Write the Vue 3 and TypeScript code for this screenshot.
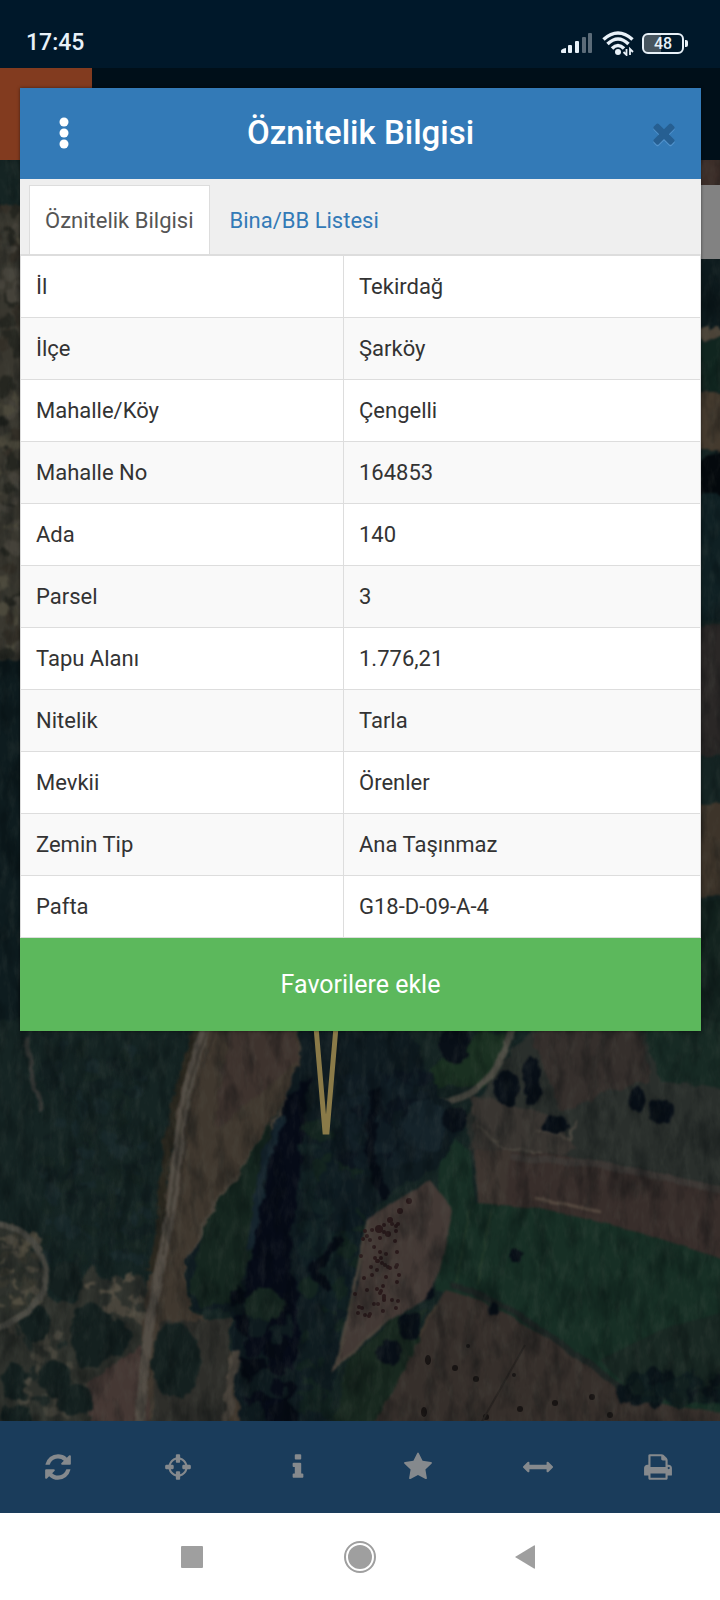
<script setup lang="ts">
import { ref } from 'vue'

interface Attribute {
  label: string
  value: string
}

interface Tool {
  name: string
  width: number
  path: string
}

interface Blob {
  x: number
  y: number
  rx: number
  ry: number
  fill: string
}

const tabs = ['Öznitelik Bilgisi', 'Bina/BB Listesi']
const activeTab = ref(0)

const attributes: Attribute[] = [
  { label: 'İl', value: 'Tekirdağ' },
  { label: 'İlçe', value: 'Şarköy' },
  { label: 'Mahalle/Köy', value: 'Çengelli' },
  { label: 'Mahalle No', value: '164853' },
  { label: 'Ada', value: '140' },
  { label: 'Parsel', value: '3' },
  { label: 'Tapu Alanı', value: '1.776,21' },
  { label: 'Nitelik', value: 'Tarla' },
  { label: 'Mevkii', value: 'Örenler' },
  { label: 'Zemin Tip', value: 'Ana Taşınmaz' },
  { label: 'Pafta', value: 'G18-D-09-A-4' },
]

const closePath =
  'M1298 1322q0 40-28 68l-136 136q-28 28-68 28t-68-28l-294-294-294 294q-28 28-68 28t-68-28l-136-136q-28-28-28-68t28-68l294-294-294-294q-28-28-28-68t28-68l136-136q28-28 68-28t68 28l294 294 294-294q28-28 68-28t68 28l136 136q28 28 28 68t-28 68l-294 294 294 294q28 28 28 68z'

const tools: Tool[] = [
  {
    name: 'Yenile',
    width: 1536,
    path: 'M1511 1056q0 5-1 7-64 268-268 434.5t-478 166.5q-146 0-282.5-55t-243.5-157l-129 129q-19 19-45 19t-45-19-19-45v-448q0-26 19-45t45-19h448q26 0 45 19t19 45-19 45l-137 137q71 66 161 102t187 36q134 0 250-65t186-179q11-17 53-117 8-23 30-23h192q13 0 22.5 9.5t9.5 22.5zm25-800v448q0 26-19 45t-45 19h-448q-26 0-45-19t-19-45 19-45l138-138q-148-137-349-137-134 0-250 65t-186 179q-11 17-53 117-8 23-30 23h-199q-13 0-22.5-9.5t-9.5-22.5v-7q65-268 270-434.5t480-166.5q146 0 284 55.5t245 156.5l130-129q19-19 45-19t45 19 19 45z',
  },
  {
    name: 'Konumum',
    width: 1536,
    path: 'M1197 1024h-109q-26 0-45-19t-19-45v-128q0-26 19-45t45-19h109q-32-108-112.5-188.5t-188.5-112.5v109q0 26-19 45t-45 19h-128q-26 0-45-19t-19-45v-109q-108 32-188.5 112.5t-112.5 188.5h109q26 0 45 19t19 45v128q0 26-19 45t-45 19h-109q32 108 112.5 188.5t188.5 112.5v-109q0-26 19-45t45-19h128q26 0 45 19t19 45v109q108-32 188.5-112.5t112.5-188.5zm339-192v128q0 26-19 45t-45 19h-143q-37 161-154.5 278.5t-278.5 154.5v143q0 26-19 45t-45 19h-128q-26 0-45-19t-19-45v-143q-161-37-278.5-154.5t-154.5-278.5h-143q-26 0-45-19t-19-45v-128q0-26 19-45t45-19h143q37-161 154.5-278.5t278.5-154.5v-143q0-26 19-45t45-19h128q26 0 45 19t19 45v143q161 37 278.5 154.5t154.5 278.5h143q26 0 45 19t19 45z',
  },
  {
    name: 'Bilgi',
    width: 640,
    path: 'M640 1344v128q0 26-19 45t-45 19h-512q-26 0-45-19t-19-45v-128q0-26 19-45t45-19h64v-384h-64q-26 0-45-19t-19-45v-128q0-26 19-45t45-19h384q26 0 45 19t19 45v576h64q26 0 45 19t19 45zm-128-1152v192q0 26-19 45t-45 19h-256q-26 0-45-19t-19-45v-192q0-26 19-45t45-19h256q26 0 45 19t19 45z',
  },
  {
    name: 'Favoriler',
    width: 1664,
    path: 'M1664 647q0 22-26 48l-363 354 86 500q1 7 1 20 0 21-10.5 35.5t-30.5 14.5q-19 0-40-12l-449-236-449 236q-22 12-40 12-21 0-31.5-14.5t-10.5-35.5q0-6 2-20l86-500-364-354q-25-27-25-48 0-37 56-46l502-73 225-455q19-41 49-41t49 41l225 455 502 73q56 9 56 46z',
  },
  {
    name: 'Ölçüm',
    width: 1792,
    path: 'M1792 896q0 26-19 45l-256 256q-19 19-45 19t-45-19-19-45v-128h-1024v128q0 26-19 45t-45 19-45-19l-256-256q-19-19-19-45t19-45l256-256q19-19 45-19t45 19 19 45v128h1024v-128q0-26 19-45t45-19 45 19l256 256q19 19 19 45z',
  },
  {
    name: 'Yazdır',
    width: 1664,
    path: 'M384 1536h896v-256h-896v256zm0-640h896v-384h-160q-40 0-68-28t-28-68v-160h-640v640zm1152 64q0-26-19-45t-45-19-45 19-19 45 19 45 45 19 45-19 19-45zm128 0v416q0 13-9.5 22.5t-22.5 9.5h-224v160q0 40-28 68t-68 28h-960q-40 0-68-28t-28-68v-160h-224q-13 0-22.5-9.5t-9.5-22.5v-416q0-79 56.5-135.5t135.5-56.5h64v-544q0-40 28-68t68-28h672q40 0 88 20t76 48l152 152q28 28 48 76t20 88v256h64q79 0 135.5 56.5t56.5 135.5z',
  },
]

// Small seeded generator, so that the vegetation is the same on every load.
let seed = 7
function random(): number {
  seed = (seed * 16807) % 2147483647
  return seed / 2147483647
}

function scatter(
  count: number,
  x: number,
  y: number,
  w: number,
  h: number,
  size: number,
  fills: string[],
): Blob[] {
  return Array.from({ length: count }, () => ({
    x: Math.round(x + random() * w),
    y: Math.round(y + random() * h),
    rx: Math.round(size * (0.5 + random())),
    ry: Math.round(size * (0.5 + random())),
    fill: fills[Math.floor(random() * fills.length)],
  }))
}

const forest = scatter(130, 45, 1030, 105, 230, 6, ['#121f20', '#18282a', '#162522'])
const rocks = [
  ...scatter(80, 0, 1235, 40, 90, 4, ['#504c3f', '#48453c', '#2c302a', '#35352d']),
  ...scatter(80, 10, 1320, 90, 100, 4, ['#4a483f', '#414038', '#1c2624', '#2a2d28']),
  ...scatter(40, 85, 1275, 60, 50, 5, ['#514c41', '#48443b', '#2a2e2a']),
  ...scatter(90, 0, 200, 20, 460, 6, ['#45423a', '#332f27', '#38372f', '#4b483b', '#252620']),
]
const grove = [
  ...scatter(90, 305, 1120, 55, 220, 9, ['#0d1a20', '#122224', '#13241f', '#0f1d22']),
  ...scatter(40, 305, 1320, 25, 100, 8, ['#12221f', '#0f1c20']),
  ...scatter(60, 240, 1290, 50, 130, 9, ['#070c17', '#0e1a1e', '#060b14']),
  ...scatter(80, 345, 1075, 80, 90, 9, ['#0c151e', '#121f26', '#0f1b22']),
]
const orchard = scatter(60, 352, 1222, 48, 95, 2, ['#2a1a1b']).filter(
  (b) => b.x > 352 + (1310 - b.y) * 0.12,
)
const shrubs = scatter(50, 625, 1375, 100, 26, 7, ['#0a1419', '#0e1c1e', '#12201f'])
</script>

<template>
  <div class="screen">
    <header class="status-bar">
      <time class="clock">17:45</time>
      <div class="indicators">
        <svg class="signal" viewBox="0 0 34 24" aria-hidden="true">
          <path d="M1 20Q1 18 6 17V22H2Q1 22 1 21Z" fill="#e8f1f8" />
          <rect x="8" y="14" width="4" height="8" rx="1" fill="#e8f1f8" />
          <rect x="15" y="10" width="4" height="12" rx="1" fill="#e8f1f8" />
          <rect x="22" y="6" width="4" height="16" rx="1" fill="#5b6b78" />
          <rect x="28" y="2" width="4" height="20" rx="1" fill="#5b6b78" />
        </svg>
        <svg class="wifi" viewBox="0 0 32 26" aria-hidden="true">
          <g fill="none" stroke="#e8f1f8" stroke-width="3.500">
            <path d="M1.500 9.500Q16-3.500 30.500 9.500" />
            <path d="M5.500 14Q16 4 26.500 14" />
            <path d="M10 18.500Q16 12.500 22 18.500" />
          </g>
          <circle cx="16" cy="22" r="3" fill="#e8f1f8" />
          <path d="M24.500 19v6l-3-3M28 25v-6l3 3" fill="none" stroke="#e8f1f8" stroke-width="1.800" />
        </svg>
        <div class="battery"><span class="battery-level">48</span></div>
      </div>
    </header>

    <div class="app-bar"><div class="app-tile"></div></div>

    <main class="map">
      <svg class="imagery" viewBox="0 160 720 1261" preserveAspectRatio="xMidYMid slice" aria-hidden="true">
        <defs>
          <filter id="rough" x="-5%" y="-5%" width="110%" height="110%" color-interpolation-filters="sRGB">
            <feTurbulence type="fractalNoise" baseFrequency="0.07" numOctaves="3" seed="4" />
            <feDisplacementMap in="SourceGraphic" scale="12" xChannelSelector="R" yChannelSelector="G" />
            <feGaussianBlur stdDeviation="1" />
          </filter>
          <filter id="smooth" x="-5%" y="-5%" width="110%" height="110%" color-interpolation-filters="sRGB">
            <feTurbulence type="fractalNoise" baseFrequency="0.05" numOctaves="2" seed="4" />
            <feDisplacementMap in="SourceGraphic" scale="4" xChannelSelector="R" yChannelSelector="G" />
            <feGaussianBlur stdDeviation="1" />
          </filter>
          <filter id="light" x="0" y="0" width="100%" height="100%" color-interpolation-filters="sRGB">
            <feTurbulence type="fractalNoise" baseFrequency="0.12 0.05" numOctaves="4" seed="9" />
            <feColorMatrix values="0 0 0 0 0.400  0 0 0 0 0.420  0 0 0 0 0.380  1.800 0 0 0 -0.800" />
          </filter>
          <filter id="shade" x="0" y="0" width="100%" height="100%" color-interpolation-filters="sRGB">
            <feTurbulence type="fractalNoise" baseFrequency="0.06 0.025" numOctaves="4" seed="2" />
            <feColorMatrix values="0 0 0 0 0  0 0 0 0 0.020  0 0 0 0 0.030  0 2.400 0 0 -1.050" />
          </filter>
        </defs>

        <rect y="160" width="720" height="1261" fill="#152423" />

        <g filter="url(#rough)">
          <!-- Western edge -->
          <rect x="-10" y="205" width="50" height="455" fill="#39372f" />
          <rect x="-10" y="660" width="50" height="360" fill="#0e1c1f" />

          <!-- Eastern edge -->
          <rect x="690" y="150" width="40" height="40" fill="#3b2d28" />
          <rect x="690" y="255" width="40" height="75" fill="#0d1a1d" />
          <rect x="690" y="328" width="40" height="10" fill="#4b4338" />
          <rect x="690" y="340" width="40" height="50" fill="#10251f" />
          <rect x="690" y="392" width="40" height="58" fill="#443a2e" />
          <path d="M730 440L700 465v30h30z" fill="#04090d" />
          <rect x="690" y="495" width="40" height="125" fill="#0f2023" />
          <rect x="690" y="625" width="40" height="130" fill="#2a2726" />
          <rect x="690" y="805" width="40" height="90" fill="#3d342a" />
          <rect x="690" y="900" width="40" height="130" fill="#13231f" />

          <!-- Forest canopy -->
          <g>
            <ellipse v-for="(b, i) in forest" :key="i" :cx="b.x" :cy="b.y" :rx="b.rx" :ry="b.ry" :fill="b.fill" />
          </g>
          <path d="M26 1035L30 1060 38 1090 40 1110" fill="none" stroke="#343735" stroke-width="6" />

          <!-- Rocky clearing -->
          <path d="M-10 1225L20 1228 45 1270 50 1300 75 1303 90 1265 105 1280 145 1275 150 1330 95 1430H-10z" fill="#2e312c" />
          <g>
            <ellipse v-for="(b, i) in rocks" :key="i" :cx="b.x" :cy="b.y" :rx="b.rx" :ry="b.ry" :fill="b.fill" />
          </g>

          <!-- Western field -->
          <path d="M205 1020L182 1085 168 1180 160 1240 148 1280 142 1330 145 1430H245L228 1330 190 1310 186 1265 215 1215 255 1150 290 1090 310 1065 295 1020z" fill="#40382f" />
          <path d="M230 1020H290L300 1060 250 1100 215 1130z" fill="#3e332e" />
          <path d="M305 1068L278 1120 215 1208 190 1260" fill="none" stroke="#4d463d" stroke-width="7" />
          <path d="M200 1025L178 1085 163 1180 160 1230 148 1270" fill="none" stroke="#2b281f" stroke-width="8" />
          <path d="M140 1345L88 1385V1430H150z" fill="#453834" />
          <path d="M160 1320H230V1430H150z" fill="#2e2e2a" />

          <g fill="#14201f">
            <ellipse cx="92" cy="1335" rx="22" ry="33" />
            <ellipse cx="115" cy="1338" rx="14" ry="18" />
            <ellipse cx="35" cy="1322" rx="14" ry="20" />
            <ellipse cx="55" cy="1378" rx="16" ry="18" />
            <ellipse cx="76" cy="1400" rx="18" ry="16" />
            <ellipse cx="15" cy="1380" rx="12" ry="20" />
            <ellipse cx="176" cy="1360" rx="24" ry="38" />
            <ellipse cx="66" cy="1282" rx="17" ry="18" />
            <ellipse cx="16" cy="1416" rx="15" ry="10" />
          </g>

          <!-- Eastern ground -->
          <path d="M340 1025H395L385 1060 350 1085z" fill="#2f2d2c" />
          <path d="M530 1025H640L730 1090V1220L480 1200 465 1120z" fill="#2a2f2c" />
          <path d="M530 1030L640 1030 650 1080 560 1110z" fill="#352f2c" />
          <path d="M640 1020H730V1090L660 1080z" fill="#172a24" />
          <path d="M470 1095L540 1110 580 1150 475 1170z" fill="#393531" />
          <path d="M410 1090L440 1060 485 1030 510 1035 490 1085z" fill="#1a3021" />
          <path d="M475 1125L505 1150 545 1152M535 1130L570 1140 576 1120" fill="none" stroke="#4b463f" stroke-width="3" />
        </g>

        <g filter="url(#smooth)">
          <!-- Tracks -->
          <path d="M-10 1223Q34 1226 46 1268Q54 1305-10 1332" fill="none" stroke="#4e4d46" stroke-width="6" />
          <path d="M209 1020Q186 1075 178 1150T163 1255Q146 1320 140 1430" fill="none" stroke="#544e46" stroke-width="10" />
          <path d="M208 1030Q186 1080 178 1150T163 1255" fill="none" stroke="#3d3830" stroke-width="2" />
          <path d="M216 1030Q196 1080 186 1130L180 1200" fill="none" stroke="#332e28" stroke-width="2" />
          <path d="M514 1025Q500 1072 475 1090T402 1100" fill="none" stroke="#4e4d45" stroke-width="7" />

          <!-- Eastern fields -->
          <path d="M475 1150L560 1155 730 1192V1265L640 1235 480 1205z" fill="#382e2b" />
          <path d="M485 1155L600 1164 730 1192" fill="none" stroke="#3d3835" stroke-width="7" />
          <path d="M475 1150H510L505 1204 478 1204z" fill="#3d3530" />
          <path d="M535 1198L565 1204 600 1212" fill="none" stroke="#54483f" stroke-width="3" />
          <path d="M440 1130L470 1150 475 1203 540 1208 640 1232 730 1262V1425H640L570 1350 480 1300 435 1290z" fill="#172f25" />
          <path d="M470 1210L455 1290M490 1210L478 1285" fill="none" stroke="#233a2a" stroke-width="2" />
          <path d="M600 1360L660 1330 730 1310V1400H640z" fill="#192823" />
          <path d="M445 1290L480 1300 570 1350 640 1400 730 1415V1430H365z" fill="#362f2b" />
          <path d="M450 1285Q500 1298 570 1350T635 1400" fill="none" stroke="#1d2523" stroke-width="6" />
          <path d="M437 1305L372 1415" fill="none" stroke="#40382f" stroke-width="3" />
        </g>

        <g filter="url(#rough)">
          <!-- River woods -->
          <path d="M300 1065L300 1025 405 1020 440 1095 465 1120 440 1165 385 1195 362 1240 345 1330 320 1430H240L230 1320 230 1310 192 1310 185 1260 230 1200 270 1140z" fill="#0f1b20" />
          <path d="M285 1100L310 1075 300 1170 290 1250 300 1330 285 1430H240L265 1350 230 1320 245 1290 265 1180z" fill="#060b17" />
          <path d="M272 1120L205 1225 190 1290 200 1308 235 1300 250 1260 262 1190z" fill="#15261f" />
          <path d="M282 1115L262 1170 250 1250" fill="none" stroke="#15242d" stroke-width="7" />
          <g>
            <ellipse v-for="(b, i) in grove" :key="i" :cx="b.x" :cy="b.y" :rx="b.rx" :ry="b.ry" :fill="b.fill" />
          </g>
          <path d="M375 1090L370 1150 385 1200M340 1240L312 1270 330 1290" fill="none" stroke="#060c15" stroke-width="10" />
          <ellipse cx="425" cy="1125" rx="22" ry="26" fill="#15232a" />
          <ellipse cx="265" cy="1305" rx="20" ry="16" fill="#15251f" />
          <path d="M236 1350L225 1430" stroke="#4c463e" stroke-width="8" />

          <!-- Single trees -->
          <path d="M425 1310L390 1320 345 1365 335 1430H370L412 1360z" fill="#18281f" />
          <g fill="#080f17">
            <ellipse cx="507" cy="1088" rx="12" ry="17" />
            <ellipse cx="532" cy="1080" rx="9" ry="24" />
            <ellipse cx="455" cy="1045" rx="16" ry="18" />
            <ellipse cx="555" cy="1126" rx="14" ry="9" />
            <ellipse cx="455" cy="1118" rx="12" ry="12" />
            <ellipse cx="638" cy="1100" rx="9" ry="11" />
            <ellipse cx="662" cy="1112" rx="12" ry="13" />
            <ellipse cx="515" cy="1256" rx="6" ry="8" />
            <ellipse cx="428" cy="1292" rx="7" ry="8" />
            <ellipse cx="494" cy="1311" rx="5" ry="6" />
            <ellipse cx="410" cy="1325" rx="11" ry="13" />
            <ellipse cx="390" cy="1352" rx="11" ry="13" />
          </g>
          <g>
            <ellipse v-for="(b, i) in shrubs" :key="i" :cx="b.x" :cy="b.y" :rx="b.rx" :ry="b.ry" :fill="b.fill" />
          </g>
        </g>

        <g filter="url(#smooth)">
          <!-- Orchard -->
          <path d="M430 1180L453 1210 440 1270 425 1300 390 1320 332 1372 358 1285 368 1218z" fill="#433935" />
          <path d="M368 1220L354 1290 336 1366 390 1318" fill="none" stroke="#4a433b" stroke-width="3" />
        </g>
        <g fill="#2a1a1b">
          <circle v-for="(b, i) in orchard" :key="i" :cx="b.x" :cy="b.y" r="2" />
          <circle cx="409" cy="1201" r="3" />
          <circle cx="400" cy="1211" r="3" />
          <circle cx="390" cy="1220" r="3" />
          <circle cx="379" cy="1229" r="4" />
          <circle cx="388" cy="1234" r="3" />
        </g>
        <g fill="#181413">
          <ellipse cx="428" cy="1360" rx="3" ry="5" />
          <circle cx="455" cy="1368" r="3" />
          <circle cx="476" cy="1379" r="3" />
          <circle cx="468" cy="1346" r="2" />
          <circle cx="514" cy="1375" r="2" />
          <ellipse cx="424" cy="1412" rx="3" ry="5" />
          <circle cx="520" cy="1409" r="3" />
          <circle cx="555" cy="1403" r="3" />
          <circle cx="592" cy="1397" r="3" />
          <circle cx="486" cy="1417" r="3" />
          <circle cx="610" cy="1415" r="3" />
        </g>
        <path d="M525 1345L480 1425" fill="none" stroke="#2a2522" stroke-width="2" />

        <rect y="160" width="720" height="1261" filter="url(#light)" opacity="0.180" />
        <rect y="160" width="720" height="1261" filter="url(#shade)" opacity="0.350" />

        <!-- Parcel outline -->
        <path d="M312 980L325 1132H327L340 980" fill="none" stroke="#8a7a48" stroke-width="5" />
      </svg>
      <div class="layer-handle"></div>
    </main>

    <nav class="toolbar" aria-label="Harita araçları">
      <button v-for="tool in tools" :key="tool.name" type="button" class="tool" :aria-label="tool.name">
        <svg class="tool-icon" :viewBox="`${(tool.width - 1792) / 2} 0 1792 1792`" aria-hidden="true">
          <path :d="tool.path" />
        </svg>
      </button>
    </nav>

    <nav class="system-nav" aria-label="Sistem">
      <button type="button" class="system-button" aria-label="Son uygulamalar">
        <svg viewBox="0 0 48 48" aria-hidden="true"><rect x="13" y="13" width="22" height="22" rx="1" fill="#9f9f9f" /></svg>
      </button>
      <button type="button" class="system-button" aria-label="Ana ekran">
        <svg viewBox="0 0 48 48" aria-hidden="true">
          <circle cx="24" cy="24" r="15" fill="none" stroke="#9f9f9f" stroke-width="2" />
          <circle cx="24" cy="24" r="12" fill="#9f9f9f" />
        </svg>
      </button>
      <button type="button" class="system-button" aria-label="Geri">
        <svg viewBox="0 0 48 48" aria-hidden="true"><path d="M11 24L30 12.500Q31 12 31 13V35Q31 36 30 35.500Z" fill="#9f9f9f" /></svg>
      </button>
    </nav>

    <section class="dialog" role="dialog" aria-labelledby="dialog-title">
      <header class="dialog-header">
        <button type="button" class="header-button menu-button" aria-label="Menü">
          <svg viewBox="0 0 32 32" aria-hidden="true">
            <g fill="#fff">
              <circle cx="16" cy="5" r="4.500" />
              <circle cx="16" cy="16" r="4.500" />
              <circle cx="16" cy="27" r="4.500" />
            </g>
          </svg>
        </button>
        <h1 id="dialog-title" class="dialog-title">Öznitelik Bilgisi</h1>
        <button type="button" class="header-button close-button" aria-label="Kapat">
          <svg viewBox="-192 0 1792 1792" aria-hidden="true">
            <path transform="translate(0 80)" fill="#5293cc" :d="closePath" />
            <path fill="#265f92" :d="closePath" />
          </svg>
        </button>
      </header>

      <div class="tabs" role="tablist">
        <button
          v-for="(tab, i) in tabs"
          :key="tab"
          type="button"
          role="tab"
          class="tab"
          :class="{ active: activeTab === i }"
          :aria-selected="activeTab === i"
          @click="activeTab = i"
        >
          {{ tab }}
        </button>
      </div>

      <table class="attributes">
        <tbody>
          <tr v-for="row in attributes" :key="row.label">
            <th scope="row">{{ row.label }}</th>
            <td>{{ row.value }}</td>
          </tr>
        </tbody>
      </table>

      <button type="button" class="favourite">Favorilere ekle</button>
    </section>
  </div>
</template>

<style>
body {
  margin: 0;
}
</style>

<style scoped>
.screen {
  position: relative;
  display: flex;
  flex-direction: column;
  min-height: 100vh;
  font-family: Roboto, 'Liberation Sans', sans-serif;
  color: #333;
}

button {
  margin: 0;
  padding: 0;
  border: 0;
  background: none;
  font: inherit;
  color: inherit;
}

svg {
  display: block;
}

.status-bar {
  display: flex;
  align-items: center;
  justify-content: space-between;
  height: 50px;
  padding: 18px 32px 0 26px;
  background: #00182a;
  color: #e8f1f8;
}

.clock {
  font-size: 23px;
  font-weight: 500;
  line-height: 32px;
}

.indicators {
  display: flex;
  align-items: center;
  gap: 8px;
}

.signal {
  width: 34px;
  height: 24px;
}

.wifi {
  width: 32px;
  height: 26px;
}

.battery {
  position: relative;
  box-sizing: border-box;
  width: 42px;
  height: 21px;
  margin-right: 4px;
  border: 2px solid #e8f1f8;
  border-radius: 6px;
  background: linear-gradient(90deg, #47555f 46%, transparent 46%);
  text-align: center;
}

.battery::after {
  content: '';
  position: absolute;
  top: 5px;
  right: -6px;
  width: 3px;
  height: 7px;
  border-radius: 0 2px 2px 0;
  background: #e8f1f8;
}

.battery-level {
  display: block;
  font-size: 16px;
  font-weight: 500;
  line-height: 17px;
}

.app-bar {
  height: 92px;
  background: #000f19;
}

.app-tile {
  width: 92px;
  height: 100%;
  background: #823b1f;
}

.map {
  position: relative;
  flex: 1;
  overflow: hidden;
  background: #142220;
}

.imagery {
  position: absolute;
  inset: 0;
  width: 100%;
  height: 100%;
}

.layer-handle {
  position: absolute;
  top: 25px;
  right: 0;
  width: 76px;
  height: 74px;
  background: #828282;
}

.toolbar {
  display: flex;
  height: 92px;
  background: #1a3c5b;
}

.tool {
  display: flex;
  flex: 1;
  align-items: center;
  justify-content: center;
  padding-right: 4px;
}

.tool-icon {
  width: 30px;
  height: 30px;
  fill: #85898d;
}

.system-nav {
  display: flex;
  align-items: center;
  justify-content: center;
  gap: 120px;
  height: 87px;
  background: #fff;
}

.system-button {
  width: 48px;
  height: 48px;
}

.dialog {
  position: absolute;
  top: 88px;
  right: 19px;
  left: 20px;
  background: #fff;
  box-shadow: 0 0 3px rgba(0, 0, 0, 0.5);
}

.dialog-header {
  box-sizing: border-box;
  display: flex;
  align-items: center;
  height: 91px;
  padding: 0 21px 2px;
  background: #337ab7;
}

.header-button {
  display: flex;
  justify-content: center;
  width: 32px;
}

.menu-button {
  margin: 0 7px;
}

.close-button {
  margin-left: 14px;
}

.header-button svg {
  width: 32px;
  height: 32px;
}

.dialog-title {
  flex: 1;
  margin: 0;
  font-size: 33px;
  font-weight: 500;
  line-height: 40px;
  text-align: center;
  color: #fff;
}

.tabs {
  display: flex;
  gap: 4px;
  padding: 6px 9px 0;
  border-bottom: 1px solid #ddd;
  background: #efefef;
}

.tab {
  height: 69px;
  padding: 0 15px;
  border: 1px solid transparent;
  border-bottom: 0;
  font-size: 22px;
  color: #337ab7;
}

.tab.active {
  border-color: #ddd;
  background: #fff;
  color: #555;
}

.attributes {
  width: 100%;
  border-collapse: collapse;
  font-size: 22px;
  line-height: 31px;
}

.attributes th,
.attributes td {
  padding: 15px;
  border: 1px solid #ddd;
  font-weight: 400;
  text-align: left;
}

.attributes th {
  width: 292px;
}

.attributes tr:nth-child(even) {
  background: #f9f9f9;
}

.favourite {
  display: block;
  width: 100%;
  height: 93px;
  background: #5cb85c;
  font-size: 25px;
  color: #fff;
}
</style>
